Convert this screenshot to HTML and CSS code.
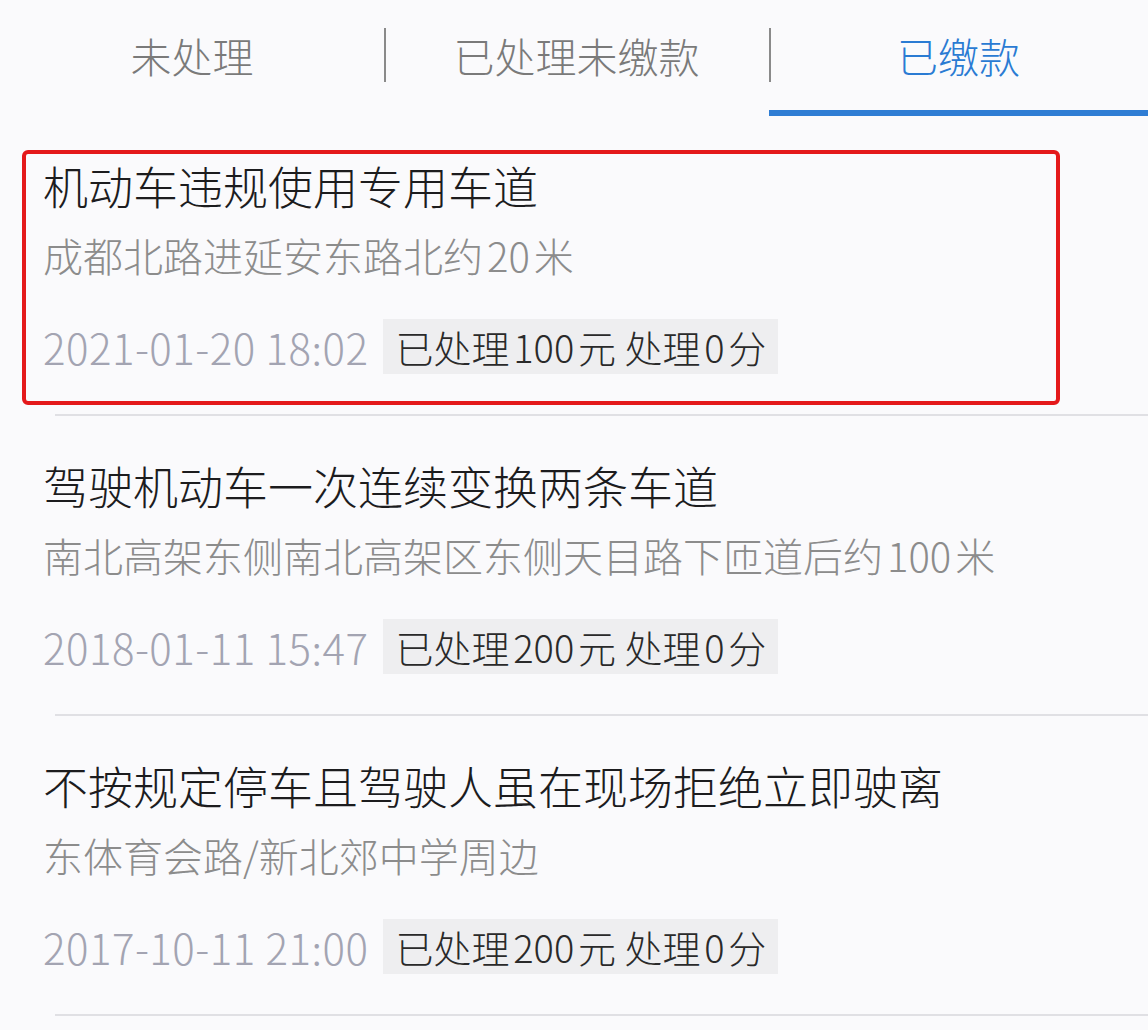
FILE: index.html
```html
<!DOCTYPE html>
<html lang="zh-CN">
<head>
<meta charset="utf-8">
<title>违法记录</title>
<link rel="stylesheet" href="styles.css">
</head>
<body>
<div class="page">
  <nav class="tabs">
    <div class="tab">未处理</div>
    <div class="tab">已处理未缴款</div>
    <div class="tab tab-active">已缴款</div>
  </nav>
  <ul class="list">
    <li class="item">
      <div class="mark"></div>
      <div class="title">机动车违规使用专用车道</div>
      <div class="place">成都北路进延安东路北约<span class="num">20</span>米</div>
      <div class="meta">
        <span class="time">2021-01-20 18:02</span>
        <span class="tag">已处理<span class="num">100</span>元 处理<span class="num">0</span>分</span>
      </div>
    </li>
    <li class="item">
      <div class="title">驾驶机动车一次连续变换两条车道</div>
      <div class="place">南北高架东侧南北高架区东侧天目路下匝道后约<span class="num">100</span>米</div>
      <div class="meta">
        <span class="time">2018-01-11 15:47</span>
        <span class="tag">已处理<span class="num">200</span>元 处理<span class="num">0</span>分</span>
      </div>
    </li>
    <li class="item">
      <div class="title">不按规定停车且驾驶人虽在现场拒绝立即驶离</div>
      <div class="place">东体育会路/新北郊中学周边</div>
      <div class="meta">
        <span class="time">2017-10-11 21:00</span>
        <span class="tag">已处理<span class="num">200</span>元 处理<span class="num">0</span>分</span>
      </div>
    </li>
  </ul>
</div>
</body>
</html>
```

FILE: styles.css
```css
html, body {
  margin: 0;
  padding: 0;
  background: #fafafc;
}
body {
  font-family: "Noto Sans CJK SC", "Noto Sans", sans-serif;
  font-weight: 300;
  color: #1c1c1e;
}
.page {
  width: 1148px;
  overflow: hidden;
}
.tabs {
  display: grid;
  grid-template-columns: 384px 385px 379px;
  height: 116px;
}
.tab {
  position: relative;
  display: flex;
  align-items: center;
  justify-content: center;
  font-size: 41px;
  color: #7a7a7a;
  height: 110px;
  border-bottom: 6px solid transparent;
}
.tab + .tab::before {
  content: "";
  position: absolute;
  left: 0;
  top: 28px;
  height: 54px;
  width: 2px;
  background: #8a8a8a;
}
.tab-active {
  color: #2a7bd3;
  border-bottom-color: #2f7dd4;
}
.list {
  list-style: none;
  margin: 0;
  padding: 0;
}
.item {
  position: relative;
  padding: 41px 0 43px 43px;
}
.item::after {
  content: "";
  position: absolute;
  left: 55px;
  right: 0;
  bottom: 0;
  height: 2px;
  background: #e0e0e4;
}
.mark {
  position: absolute;
  left: 22px;
  top: 34px;
  width: 1038px;
  height: 255px;
  box-sizing: border-box;
  border: 4px solid #e4191b;
  border-radius: 6px;
  z-index: 1;
}
.title {
  font-size: 45px;
  line-height: 58px;
  color: #1c1c1e;
}
.place {
  margin-top: 16px;
  font-size: 40px;
  line-height: 48px;
  color: #8c8c8c;
}
.num {
  margin: 0 0.1em;
}
.meta {
  margin-top: 40px;
  display: flex;
  align-items: center;
  gap: 15px;
  height: 54px;
}
.time {
  font-size: 42px;
  letter-spacing: 0.5px;
  color: #a3a4b2;
}
.tag {
  display: flex;
  align-items: center;
  height: 55px;
  padding: 0 12px;
  background: #eeeef0;
  font-size: 38px;
  color: #2a2a2a;
  white-space: pre;
}
```
